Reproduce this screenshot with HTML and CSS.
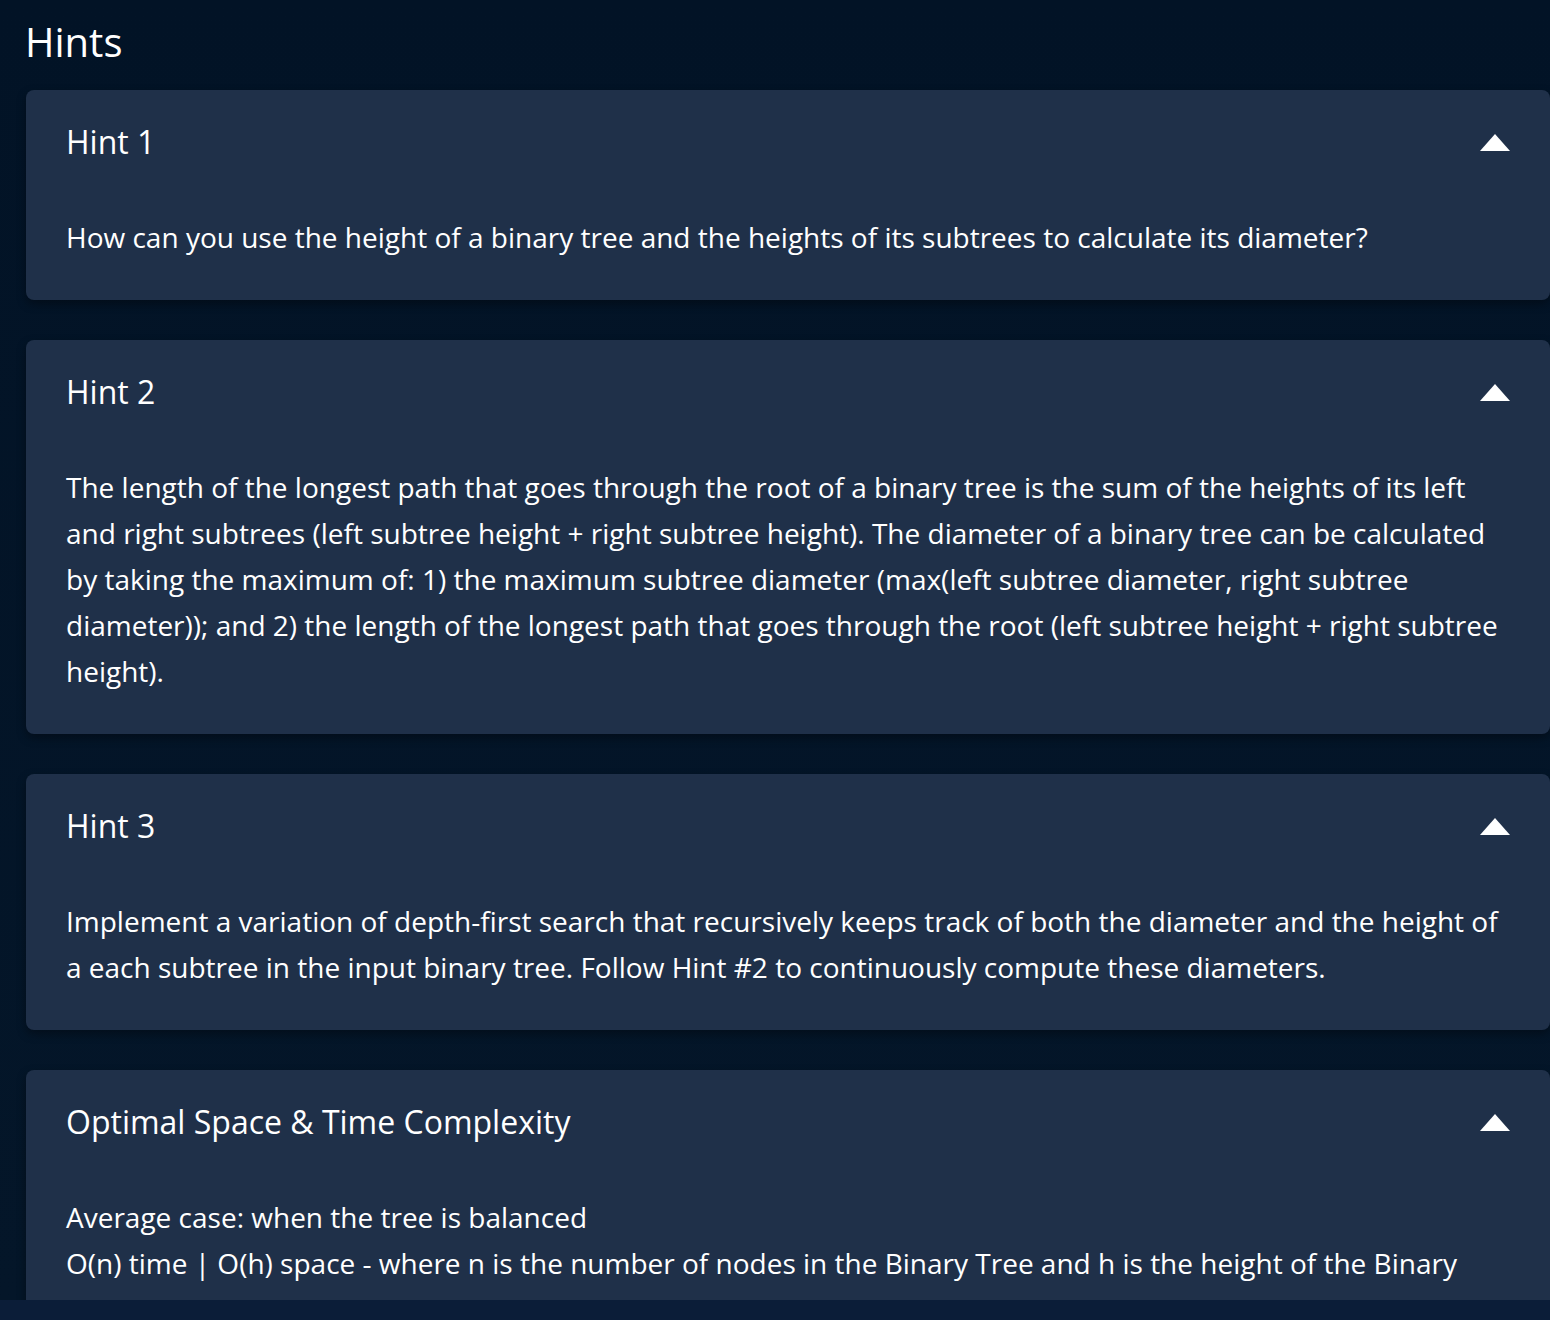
FILE: index.html
```html
<!DOCTYPE html>
<html lang="en">
<head>
<meta charset="utf-8">
<title>Hints</title>
<link rel="stylesheet" href="styles.css">
</head>
<body>
<main class="page">
  <h1 class="page-title">Hints</h1>
  <section class="hint">
    <div class="hint-head">
      <h2 class="hint-title">Hint 1</h2>
      <svg class="caret" width="30" height="17" viewBox="0 0 30 17"><path d="M15 0 L30 17 L0 17 Z" fill="#fff"/></svg>
    </div>
    <div class="hint-body">
      <p>How can you use the height of a binary tree and the heights of its subtrees to calculate its diameter?</p>
    </div>
  </section>
  <section class="hint">
    <div class="hint-head">
      <h2 class="hint-title">Hint 2</h2>
      <svg class="caret" width="30" height="17" viewBox="0 0 30 17"><path d="M15 0 L30 17 L0 17 Z" fill="#fff"/></svg>
    </div>
    <div class="hint-body">
      <p>The length of the longest path that goes through the root of a binary tree is the sum of the heights of its left and right subtrees (left subtree height + right subtree height). The diameter of a binary tree can be calculated by taking the maximum of: 1) the maximum subtree diameter (max(left subtree diameter, right subtree diameter)); and 2) the length of the longest path that goes through the root (left subtree height + right subtree height).</p>
    </div>
  </section>
  <section class="hint">
    <div class="hint-head">
      <h2 class="hint-title">Hint 3</h2>
      <svg class="caret" width="30" height="17" viewBox="0 0 30 17"><path d="M15 0 L30 17 L0 17 Z" fill="#fff"/></svg>
    </div>
    <div class="hint-body">
      <p>Implement a variation of depth-first search that recursively keeps track of both the diameter and the height of a each subtree in the input binary tree. Follow Hint #2 to continuously compute these diameters.</p>
    </div>
  </section>
  <section class="hint">
    <div class="hint-head">
      <h2 class="hint-title">Optimal Space &amp; Time Complexity</h2>
      <svg class="caret" width="30" height="17" viewBox="0 0 30 17"><path d="M15 0 L30 17 L0 17 Z" fill="#fff"/></svg>
    </div>
    <div class="hint-body">
      <p>Average case: when the tree is balanced</p>
      <p>O(n) time | O(h) space - where n is the number of nodes in the Binary Tree and h is the height of the Binary Tree.</p>
    </div>
  </section>
</main>
</body>
</html>
```

FILE: styles.css
```css
html, body {
  margin: 0;
  padding: 0;
}
body {
  background: #0b1d38;
  font-family: "Open Sans", "Noto Sans", sans-serif;
  color: #ffffff;
}
.page {
  height: 1300px;
  overflow: hidden;
  box-sizing: border-box;
  padding: 18px 0 0 26px;
  background: linear-gradient(#021326, #041629);
  display: flex;
  flex-direction: column;
  gap: 40px;
}
.page-title {
  margin: 0 0 -16px -1px;
  font-size: 40px;
  line-height: 48px;
  font-weight: 500;
  color: #ffffff;
}
.hint {
  flex: none;
  background: #1f3049;
  border-radius: 8px;
  box-shadow: 0 4px 10px rgba(0, 0, 0, 0.35);
}
.hint-head {
  display: flex;
  align-items: center;
  justify-content: space-between;
  padding: 31px 40px 29px;
}
.hint-title {
  margin: 0;
  font-size: 32px;
  line-height: 42px;
  font-weight: 400;
}
.caret {
  display: block;
}
.hint-body {
  padding: 22px 40px 40px;
}
.hint-body p {
  margin: 0;
  font-size: 28px;
  line-height: 46px;
}
```
